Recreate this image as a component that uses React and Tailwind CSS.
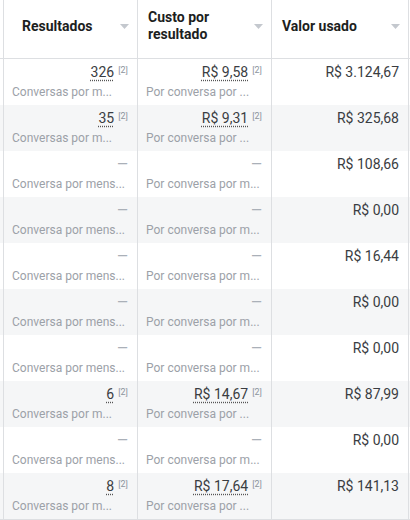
import React from "react";

const rows = [
  { r: "326", rs: "Conversas por m...", c: "R$ 9,58", cs: "Por conversa por ...", v: "R$ 3.124,67" },
  { r: "35", rs: "Conversas por m...", c: "R$ 9,31", cs: "Por conversa por ...", v: "R$ 325,68" },
  { r: null, rs: "Conversa por mens...", c: null, cs: "Por conversa por m...", v: "R$ 108,66" },
  { r: null, rs: "Conversa por mens...", c: null, cs: "Por conversa por m...", v: "R$ 0,00" },
  { r: null, rs: "Conversa por mens...", c: null, cs: "Por conversa por m...", v: "R$ 16,44" },
  { r: null, rs: "Conversa por mens...", c: null, cs: "Por conversa por m...", v: "R$ 0,00" },
  { r: null, rs: "Conversa por mens...", c: null, cs: "Por conversa por m...", v: "R$ 0,00" },
  { r: "6", rs: "Conversas por m...", c: "R$ 14,67", cs: "Por conversa por ...", v: "R$ 87,99" },
  { r: null, rs: "Conversa por mens...", c: null, cs: "Por conversa por m...", v: "R$ 0,00" },
  { r: "8", rs: "Conversas por m...", c: "R$ 17,64", cs: "Por conversa por ...", v: "R$ 141,13" },
];

function Caret() {
  return (
    <svg width="9" height="5" viewBox="0 0 9 5" className="shrink-0">
      <path d="M0 0 L9 0 L4.5 5 Z" fill="#c4c8ce" />
    </svg>
  );
}

function Value({ val }) {
  if (!val) {
    return (
      <div className="flex h-[20px] items-center justify-end text-[14px] text-[#aab0b8]">—</div>
    );
  }
  return (
    <div className="flex h-[20px] items-start justify-end text-[14px] leading-[20px] text-[#3a3d42]">
      <span className="underline decoration-dotted decoration-[#555] underline-offset-[3px]">{val}</span>
      <span className="ml-[4px] text-[9px] leading-[16px] text-[#8d949e]">[2]</span>
    </div>
  );
}

export default function App() {
  return (
    <div
      className="w-[410px] h-[520px] overflow-hidden bg-white"
      style={{ fontFamily: "Roboto, 'Liberation Sans', sans-serif" }}
    >
      <div className="grid grid-cols-[4px_134px_134px_137px_1fr] border-b border-[#dddfe2]">
        {/* header */}
        <div className="h-[59px] border-r border-b border-[#dddfe2]" />
        <div className="flex h-[59px] items-center justify-between border-r border-b border-[#dddfe2] pl-[18px] pr-[8px] pb-[6px]">
          <span className="text-[14px] font-bold text-[#1c1e21]">Resultados</span>
          <Caret />
        </div>
        <div className="flex h-[59px] items-center justify-between border-r border-b border-[#dddfe2] pl-[10px] pr-[8px] pb-[6px]">
          <span className="text-[14px] font-bold leading-[17px] text-[#1c1e21]">
            Custo por
            <br />
            resultado
          </span>
          <Caret />
        </div>
        <div className="flex h-[59px] items-center justify-between border-r border-b border-[#dddfe2] pl-[10px] pr-[8px] pb-[6px]">
          <span className="text-[14px] font-bold text-[#1c1e21]">Valor usado</span>
          <Caret />
        </div>
        <div className="h-[59px] border-b border-[#dddfe2]" />

        {rows.map((row, i) => {
          const bg = i % 2 === 1 ? "bg-[#f5f6f7]" : "bg-white";
          return (
            <React.Fragment key={i}>
              <div className={`h-[46px] border-r border-[#dddfe2] ${bg}`} />
              <div className={`h-[46px] border-r border-[#dddfe2] pl-[8px] pr-[9px] pt-[3px] ${bg}`}>
                <Value val={row.r} />
                <div className="mt-[2px] whitespace-nowrap text-[12px] leading-[16px] text-[#9ca1a8]">{row.rs}</div>
              </div>
              <div className={`h-[46px] border-r border-[#dddfe2] pl-[8px] pr-[9px] pt-[3px] ${bg}`}>
                <Value val={row.c} />
                <div className="mt-[2px] whitespace-nowrap text-[12px] leading-[16px] text-[#9ca1a8]">{row.cs}</div>
              </div>
              <div className={`h-[46px] border-r border-[#dddfe2] pl-[8px] pr-[9px] pt-[3px] ${bg}`}>
                <div className="text-right text-[14px] leading-[20px] text-[#3a3d42]">{row.v}</div>
              </div>
              <div className={`h-[46px] ${bg}`} />
            </React.Fragment>
          );
        })}
      </div>
    </div>
  );
}
